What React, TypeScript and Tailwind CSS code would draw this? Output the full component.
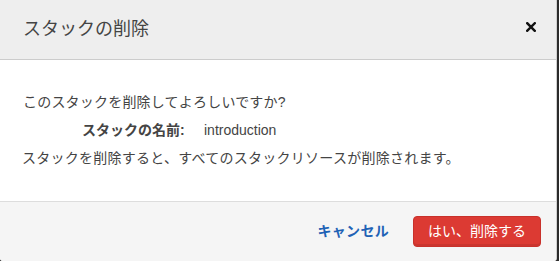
import React from 'react';

const font = { fontFamily: '"Liberation Sans", "Noto Sans CJK JP", sans-serif' };

const DeleteStackModal: React.FC = () => {
    return (
        <div className="w-[559px] h-[261px] bg-[#2b2b2b] overflow-hidden" style={font}>
            <div className="w-[557px] h-[261px] bg-white border-r border-[#cfcfcf] rounded-b-[3px] overflow-hidden flex flex-col">
                <div className="h-[60px] shrink-0 bg-[#eeeeee] border-b border-[#cccccc] flex items-center justify-between pl-[23px] pr-[19px]">
                    <h2 className="text-[18px] text-[#444] leading-none pb-[2px]">スタックの削除</h2>
                    <button className="text-[#111] w-[12px] h-[12px] flex items-center justify-center mt-[-6px]">
                        <svg width="10" height="10" viewBox="0 0 10 10">
                            <path d="M1.2 1.2 L8.8 8.8 M8.8 1.2 L1.2 8.8" stroke="currentColor" strokeWidth="2.4" strokeLinecap="square" />
                        </svg>
                    </button>
                </div>

                <div className="h-[141px] shrink-0 pt-[28px] pl-[23px] text-[14px] text-[#444] leading-[28px]">
                    <p className="tracking-[0.2px]">このスタックを削除してよろしいですか?</p>
                    <p className="flex">
                        <span className="font-bold w-[121px] pl-[59px] box-content">スタックの名前:</span>
                        <span className="ml-[1px]">introduction</span>
                    </p>
                    <p className="-ml-[1px] tracking-[0.26px]">スタックを削除すると、すべてのスタックリソースが削除されます。</p>
                </div>

                <div className="flex-1 bg-[#f5f5f5] border-t border-[#dddddd] flex items-start justify-end pt-[14px] pr-[15px] gap-[24px]">
                    <button className="h-[31px] text-[14px] font-bold text-[#1f62b5] tracking-[0.3px]">キャンセル</button>
                    <button className="h-[31px] w-[128px] rounded-[4px] bg-[#dc3a33] border border-[#c8312b] text-white text-[14px] shadow-[inset_0_-2px_0_rgba(0,0,0,0.08)]">
                        はい、削除する
                    </button>
                </div>
            </div>
        </div>
    );
};

export default function App() {
    return <DeleteStackModal />;
}
